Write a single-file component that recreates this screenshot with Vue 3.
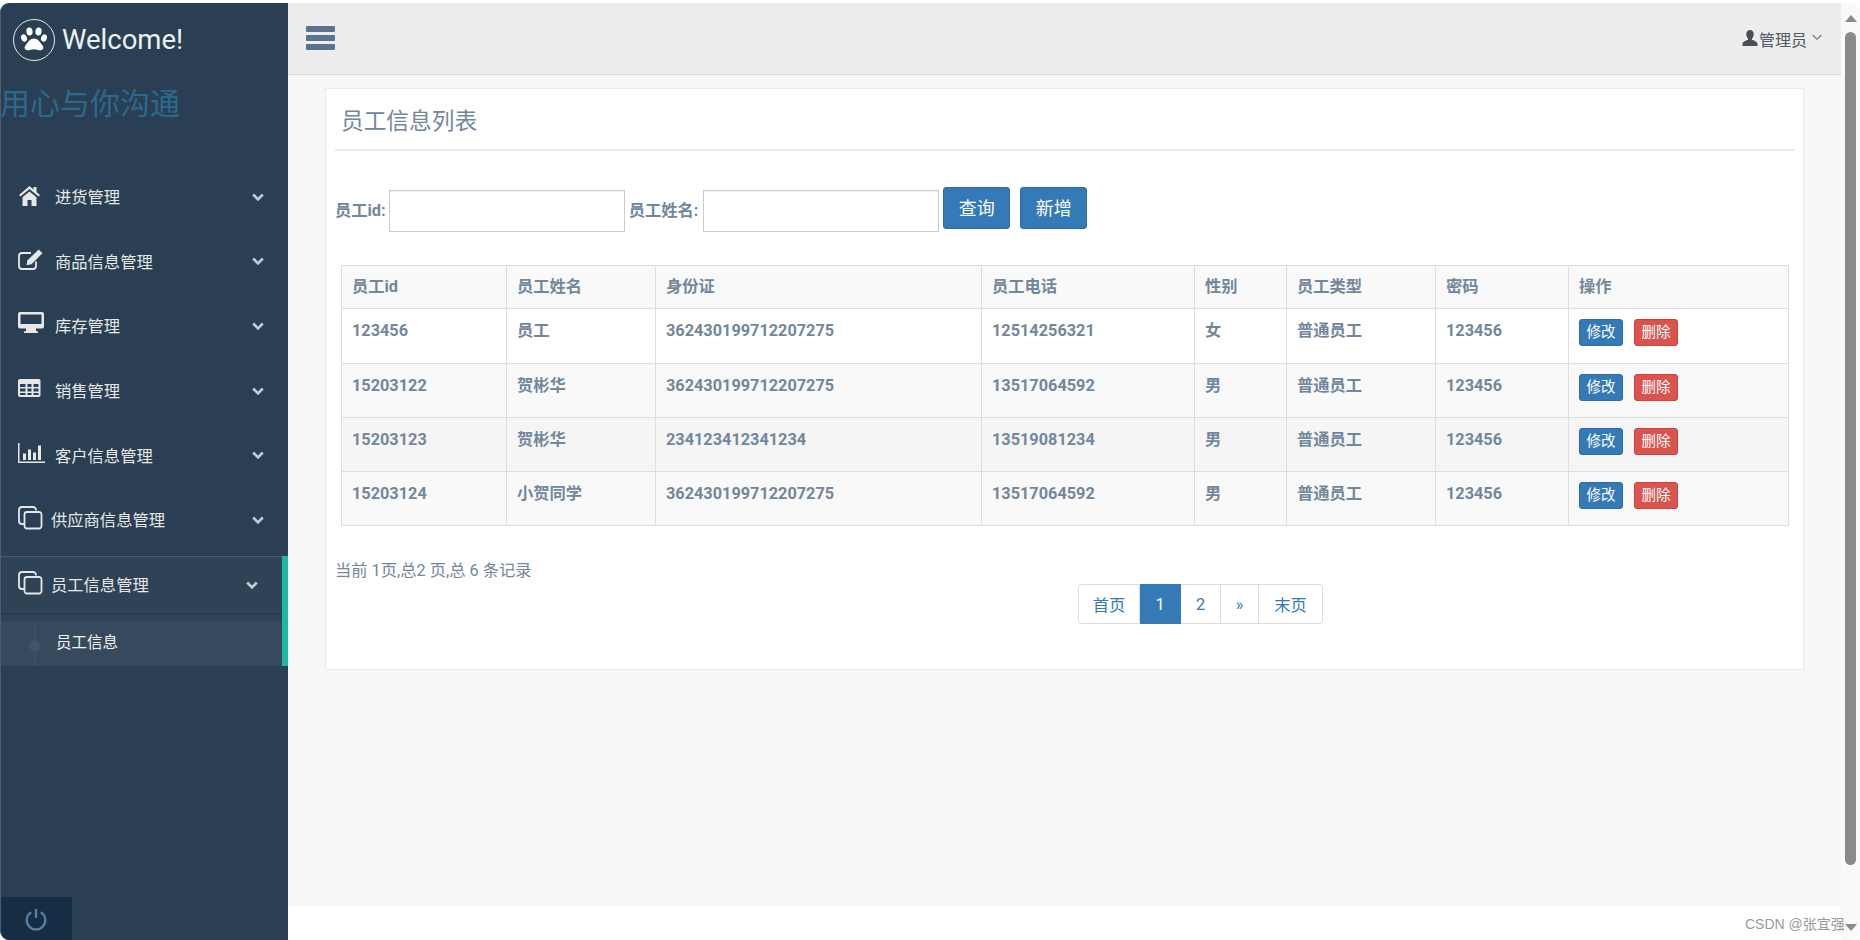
<script setup>
const cloneIcon =
  "M18 3.500V3a3 3 0 0 0-3-3H4a3 3 0 0 0-3 3v11a3 3 0 0 0 3 3h2M9 5h12a2.500 2.500 0 0 1 2.500 2.500V19a2.500 2.500 0 0 1-2.500 2.500H9A2.500 2.500 0 0 1 6.500 19V7.500A2.500 2.500 0 0 1 9 5z";

const menus = [
  {
    name: "进货管理",
    fill: "M11.500 2 1 11l1.400 1.600 9.100-7.700 9.100 7.700L22 11l-3.500-3V3h-3v2.400zM4.500 13.300V22h5v-6h4v6h5v-8.700l-7-5.900z",
  },
  {
    name: "商品信息管理",
    fill: "M20.800.500l3.700 3.700L13.500 15.200l-5 1 1-5z",
    line: "M13 4H4a3 3 0 0 0-3 3v10a3 3 0 0 0 3 3h11a3 3 0 0 0 3-3v-4.500",
  },
  {
    name: "库存管理",
    fill: "M2-1h22a2 2 0 0 1 2 2v12.500a2 2 0 0 1-2 2h-6V18l2 .5V20H6v-1.500l2-.5v-2.500H2a2 2 0 0 1-2-2V1a2 2 0 0 1 2-2zM2.500 1.500V11h21V1.500z",
  },
  {
    name: "销售管理",
    fill: "M2 1h18.500a2 2 0 0 1 2 2v14a2 2 0 0 1-2 2H2a2 2 0 0 1-2-2V3a2 2 0 0 1 2-2zM2 6v3h5.500V6zm7.500 0v3h4V6zm6 0v3h5V6zM2 10.500v3h5.500v-3zm7.500 0v3h4v-3zm6 0v3h5v-3zM2 15v2h5.500v-2zm7.500 0v2h4v-2zm6 0v2h5v-2z",
  },
  {
    name: "客户信息管理",
    fill: "M0 0h1.500v18.500H27V20H0zM5 10.500h3V17H5zM10 6.500h3V17h-3zM15 9.500h3V17h-3zM20 2.500h3V17h-3z",
  },
  { name: "供应商信息管理", tight: true, line: cloneIcon },
  { name: "员工信息管理", tight: true, active: true, line: cloneIcon },
];

const columns = ["员工id", "员工姓名", "身份证", "员工电话", "性别", "员工类型", "密码", "操作"];

const employees = [
  { id: "123456", name: "员工", card: "362430199712207275", phone: "12514256321", sex: "女", type: "普通员工", pwd: "123456" },
  { id: "15203122", name: "贺彬华", card: "362430199712207275", phone: "13517064592", sex: "男", type: "普通员工", pwd: "123456" },
  { id: "15203123", name: "贺彬华", card: "234123412341234", phone: "13519081234", sex: "男", type: "普通员工", pwd: "123456" },
  { id: "15203124", name: "小贺同学", card: "362430199712207275", phone: "13517064592", sex: "男", type: "普通员工", pwd: "123456" },
];
</script>

<template>
  <div class="page">
    <aside class="sidebar">
      <div class="brand">
        <svg class="paw" width="44" height="44" viewBox="0 0 44 44">
          <circle cx="22" cy="22" r="20.500" fill="none" stroke="#e7e7e7" stroke-width="1" />
          <ellipse cx="12" cy="20" rx="2.900" ry="3.700" fill="#fff" transform="rotate(-20 12 20)" />
          <ellipse cx="32" cy="20" rx="2.900" ry="3.700" fill="#fff" transform="rotate(20 32 20)" />
          <ellipse cx="17.500" cy="13.500" rx="3.100" ry="4" fill="#fff" transform="rotate(-8 17.500 13.500)" />
          <ellipse cx="26.500" cy="13.500" rx="3.100" ry="4" fill="#fff" transform="rotate(8 26.500 13.500)" />
          <path d="M22 20.500c3.500 0 5.500 3 7.500 5.500 1.500 2 2.500 3.500 1.500 5-1 1.500-3.500 1.500-5 1-1.500-.5-2.500-.8-4-.8s-2.500.3-4 .8c-1.500.5-4 .5-5-1-1-1.500 0-3 1.500-5 2-2.500 4-5.500 7.500-5.500z" fill="#fff" />
        </svg>
        <span class="welcome">Welcome!</span>
      </div>
      <div class="slogan">用心与你沟通</div>

      <ul class="menu">
        <li v-for="m in menus" :key="m.name" class="menu-item" :class="{ active: m.active }">
          <svg class="menu-icon" width="28" height="24" viewBox="0 0 28 24">
            <path v-if="m.fill" :d="m.fill" fill="#e7e7e7" fill-rule="evenodd" />
            <path v-if="m.line" :d="m.line" fill="none" stroke="#e7e7e7" stroke-width="1.800" />
          </svg>
          <span class="menu-text" :class="{ tight: m.tight }">{{ m.name }}</span>
          <svg class="chevron" width="12" height="9" viewBox="0 0 12 9">
            <path d="M1.200 1.500 6 6.300l4.800-4.800" fill="none" stroke="#c3cbd4" stroke-width="2.600" />
          </svg>
        </li>
      </ul>
      <div class="submenu">
        <div class="sub-item">
          <span class="sub-dot"></span>
          <span>员工信息</span>
        </div>
      </div>

      <div class="sidebar-footer">
        <svg width="24" height="24" viewBox="0 0 24 24">
          <path d="M7.200 5.200a9.300 9.300 0 1 0 9.600 0" fill="none" stroke="#5a7fa3" stroke-width="2.200" />
          <path d="M12 2v9" fill="none" stroke="#5a7fa3" stroke-width="2.400" />
        </svg>
      </div>
    </aside>

    <div class="right">
      <header class="topbar">
        <div class="burger"><i></i><i></i><i></i></div>
        <div class="user">
          <svg width="16" height="16" viewBox="0 0 16 16">
            <path d="M8 0c2.400 0 3.700 1.800 3.700 4.200 0 1.800-.8 3.300-1.700 4.200v1.300c1.700.8 5.300 1.500 5.500 4.300V16H.5v-2c.2-2.800 3.800-3.500 5.500-4.300V8.400C5.100 7.500 4.300 6 4.300 4.200 4.300 1.800 5.600 0 8 0z" fill="#4a4f55" />
          </svg>
          <span>管理员</span>
          <svg width="10" height="7" viewBox="0 0 10 7">
            <path d="M.7 1 5 5.300 9.300 1" fill="none" stroke="#5a738e" stroke-width="1.100" />
          </svg>
        </div>
      </header>

      <main class="content">
        <section class="card">
          <h2 class="title">员工信息列表</h2>
          <div class="search">
            <label>员工id:</label>
            <input class="field" type="text" />
            <label class="second">员工姓名:</label>
            <input class="field" type="text" />
            <button class="btn">查询</button>
            <button class="btn add">新增</button>
          </div>

          <table class="grid">
            <colgroup>
              <col class="c1" /><col class="c2" /><col class="c3" /><col class="c4" />
              <col class="c5" /><col class="c6" /><col class="c7" /><col class="c8" />
            </colgroup>
            <thead>
              <tr>
                <th v-for="c in columns" :key="c">{{ c }}</th>
              </tr>
            </thead>
            <tbody>
              <tr v-for="e in employees" :key="e.id">
                <td>{{ e.id }}</td>
                <td>{{ e.name }}</td>
                <td>{{ e.card }}</td>
                <td>{{ e.phone }}</td>
                <td>{{ e.sex }}</td>
                <td>{{ e.type }}</td>
                <td>{{ e.pwd }}</td>
                <td class="ops">
                  <button class="mini edit">修改</button>
                  <button class="mini del">删除</button>
                </td>
              </tr>
            </tbody>
          </table>

          <p class="summary">当前 1页,总2 页,总 6 条记录</p>
          <ul class="pager">
            <li class="p1">首页</li>
            <li class="p2 on">1</li>
            <li class="p3">2</li>
            <li class="p4">»</li>
            <li class="p5">末页</li>
          </ul>
        </section>
      </main>
      <div class="bottom-gap"></div>
    </div>

    <div class="scrollbar">
      <span class="arrow up"></span>
      <div class="thumb"></div>
      <span class="arrow down"></span>
    </div>

    <span class="watermark">CSDN @张宜强</span>
  </div>
</template>

<style>
html,
body {
  margin: 0;
  overflow: hidden;
  background: #fff;
}
</style>

<style scoped>
.page {
  position: relative;
  display: flex;
  width: 1860px;
  height: 940px;
  box-sizing: border-box;
  padding-top: 3px;
  overflow: hidden;
  font-family: Roboto, "Noto Sans CJK SC", sans-serif;
  font-size: 16.300px;
  color: #73879c;
}

.sidebar {
  position: relative;
  flex: none;
  width: 288px;
  background: #2a3f54;
  border-radius: 9px 0 0 9px;
  border-left: 1px solid #4c5d6e;
  box-sizing: border-box;
  overflow: hidden;
}

.brand {
  display: flex;
  align-items: center;
  height: 44px;
  padding: 15px 0 0 11px;
}

.welcome {
  margin: -2px 0 0 6px;
  font-size: 27.500px;
  color: #ecf0f1;
}

.slogan {
  margin: 19px 0 0 -1px;
  font-size: 30px;
  line-height: 46px;
  color: #2a6a8e;
}

.menu {
  list-style: none;
  margin: 41px 0 0;
  padding: 0;
  display: flex;
  flex-direction: column;
  gap: 6.700px;
}

.menu-item {
  display: flex;
  align-items: center;
  height: 58px;
  padding-left: 17px;
  color: #e7e7e7;
  box-sizing: border-box;
}

.menu-icon {
  flex: none;
  margin-top: -2px;
  overflow: visible;
}

.menu-text {
  margin: 2px 0 0 9px;
  line-height: 24px;
}

.menu-text.tight {
  margin-left: 5px;
}

.chevron {
  position: absolute;
  left: 251px;
}

.menu-item.active {
  position: relative;
  background: #2f4357;
  border-top: 1px solid #4b5d6e;
  border-bottom: 1px solid #23364a;
}

.menu-item.active::after {
  content: "";
  position: absolute;
  z-index: 1;
  top: -1px;
  right: 0;
  width: 6px;
  height: 110px;
  background: #1abb9c;
}

.menu-item.active .chevron {
  left: 245px;
}

.submenu {
  padding-top: 7px;
  background: #2e4358;
}

.sub-item {
  position: relative;
  display: flex;
  align-items: center;
  height: 45px;
  box-sizing: border-box;
  padding: 0 0 5px 55px;
  background: #36495d;
  color: #f2f2f2;
  font-size: 15.500px;
}

.sub-item::before {
  content: "";
  position: absolute;
  left: 33px;
  top: 0;
  bottom: 0;
  width: 1px;
  background: #425568;
}

.sub-dot {
  position: absolute;
  left: 28px;
  top: 19px;
  width: 11px;
  height: 11px;
  border-radius: 50%;
  background: #425568;
}

.sidebar-footer {
  position: absolute;
  left: 0;
  bottom: 0;
  display: flex;
  align-items: center;
  justify-content: center;
  width: 71px;
  height: 43px;
  box-sizing: border-box;
  padding-right: 2px;
  background: #172d44;
}

.right {
  flex: none;
  display: flex;
  flex-direction: column;
  width: 1553px;
}

.topbar {
  flex: none;
  display: flex;
  align-items: center;
  justify-content: space-between;
  height: 72px;
  background: #ededed;
  border-bottom: 1px solid #d9dee4;
  box-sizing: border-box;
  padding: 0 19px 2px 18px;
}

.burger {
  display: flex;
  flex-direction: column;
  gap: 3px;
  width: 29px;
}

.burger i {
  display: block;
  height: 6px;
  border-radius: 1px;
  background: #5a738e;
}

.user {
  display: flex;
  align-items: center;
  font-size: 16px;
  color: #515a64;
}

.user span {
  margin: 2px 5px 0 1px;
}

.content {
  flex: none;
  height: 831px;
  box-sizing: border-box;
  padding: 13px 0 0 37px;
  background: #f7f7f7;
}

.bottom-gap {
  flex: 1;
  background: #fff;
}

.card {
  width: 1479px;
  height: 582px;
  box-sizing: border-box;
  padding: 0 9px;
  background: #fff;
  border: 1px solid #e6e9ed;
}

.title {
  margin: 0;
  height: 62px;
  padding: 15px 0 0 6px;
  box-sizing: border-box;
  font-size: 22.700px;
  font-weight: 400;
  line-height: 36px;
  border-bottom: 2px solid #e6e9ed;
}

.search {
  display: flex;
  align-items: flex-start;
  height: 114px;
  padding-top: 36px;
  box-sizing: border-box;
  font-weight: 700;
}

.search label {
  margin: 12px 3px 0 0;
  line-height: 24px;
}

.search .second {
  margin-left: 4px;
  margin-right: 5px;
}

.field {
  width: 236px;
  height: 42px;
  margin: 3px 0 0;
  padding: 0;
  box-sizing: border-box;
  border: 1px solid #ccc;
  background: #fff;
  box-shadow: inset 0 1px 1px rgba(0, 0, 0, 0.075);
  outline: none;
}

.btn {
  width: 67px;
  height: 42px;
  margin-left: 4px;
  padding: 0 0 2px;
  border: 1px solid #2e6da4;
  border-radius: 3px;
  background: #337ab7;
  color: #fff;
  font-family: inherit;
  font-size: 18px;
}

.btn.add {
  margin-left: 10px;
}

.grid {
  width: 1447px;
  margin-left: 6px;
  table-layout: fixed;
  border-collapse: collapse;
  font-weight: 700;
}

.c1 {
  width: 165px;
}

.c2,
.c6 {
  width: 149px;
}

.c3 {
  width: 326px;
}

.c4 {
  width: 213px;
}

.c5 {
  width: 92px;
}

.c7 {
  width: 133px;
}

.c8 {
  width: 220px;
}

.grid th,
.grid td {
  border: 1px solid #ddd;
  padding: 10px;
  text-align: left;
  vertical-align: top;
  line-height: 24px;
}

.grid th {
  height: 23px;
  background: #f9f9f9;
  padding: 9px 10px;
}

.grid td {
  height: 33px;
}

.grid tbody tr:first-child td {
  height: 34px;
}

.grid td.ops {
  padding: 10px 10px 0;
  line-height: 0;
}

.grid tbody tr:nth-child(even) td {
  background: #f9f9f9;
}

.grid tbody tr:nth-child(3) td {
  background: #f5f5f5;
}

.mini {
  width: 44px;
  height: 27px;
  padding: 0;
  margin-right: 11px;
  border-radius: 3px;
  color: #fff;
  font-family: inherit;
  font-size: 14.500px;
  line-height: 25px;
}

.edit {
  background: #337ab7;
  border: 1px solid #2e6da4;
}

.del {
  background: #d9534f;
  border: 1px solid #d43f3a;
}

.summary {
  margin: 33px 0 0;
  line-height: 24px;
}

.pager {
  display: flex;
  width: 245px;
  height: 40px;
  list-style: none;
  margin: 1px 0 0 743px;
  padding: 0;
  box-sizing: border-box;
  color: #337ab7;
}

.pager li {
  display: flex;
  align-items: center;
  justify-content: center;
  box-sizing: border-box;
  border: 1px solid #ddd;
  border-left: none;
  background: #fff;
}

.pager .p1 {
  width: 62px;
  border-left: 1px solid #ddd;
  border-radius: 4px 0 0 4px;
}

.pager .p2 {
  width: 41px;
}

.pager .on {
  background: #337ab7;
  border-color: #337ab7;
  color: #fff;
}

.pager .p3 {
  width: 40px;
}

.pager .p4 {
  width: 38px;
}

.pager .p5 {
  width: 64px;
  border-radius: 0 4px 4px 0;
}

.scrollbar {
  flex: none;
  position: relative;
  width: 19px;
  display: flex;
  flex-direction: column;
  align-items: center;
  background: #f9f9f9;
  border-radius: 0 9px 9px 0;
}

.thumb {
  width: 11px;
  height: 833px;
  margin-top: 2px;
  border-radius: 6px;
  background: #8a8a8a;
}

.arrow {
  width: 0;
  height: 0;
  border-left: 6.500px solid transparent;
  border-right: 6.500px solid transparent;
}

.arrow.up {
  margin-top: 12px;
  border-bottom: 7px solid #8a8a8a;
  margin-bottom: 8px;
}

.arrow.down {
  margin-top: 59px;
  border-top: 7px solid #8a8a8a;
}

.watermark {
  position: absolute;
  left: 1745px;
  top: 915px;
  font-family: "Liberation Sans", "Noto Sans CJK SC", sans-serif;
  font-size: 14px;
  line-height: 18px;
  color: #9a9a9a;
}
</style>
